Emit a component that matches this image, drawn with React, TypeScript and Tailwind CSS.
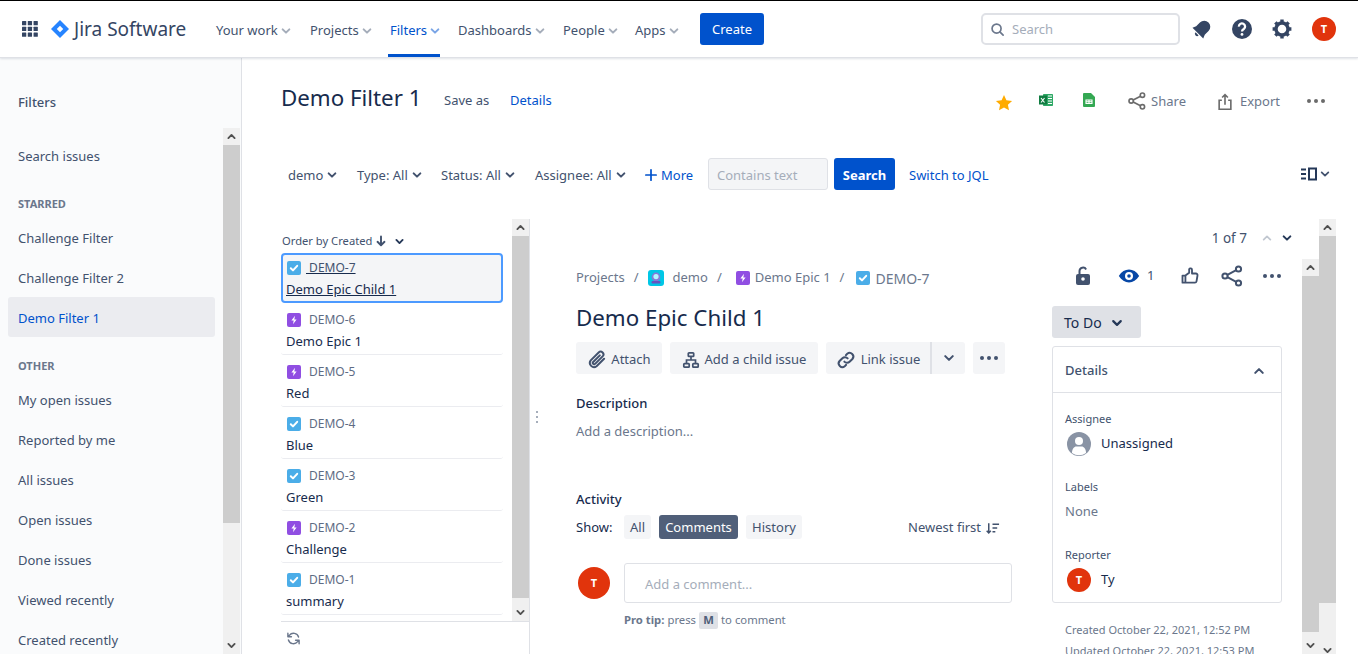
import type { ReactNode } from "react";

function Chevron({ className = "", up = false, color = "#42526e", width = 2.4 }: { className?: string; up?: boolean; color?: string; width?: number }) {
  return (
    <svg viewBox="0 0 24 24" className={className} fill="none" stroke={color} strokeWidth={width} strokeLinecap="round" strokeLinejoin="round">
      <path d={up ? "M7 14.5l5-5 5 5" : "M7 9.5l5 5 5-5"} />
    </svg>
  );
}

function Dots({ color = "#42526e" }: { color?: string }) {
  return (
    <svg viewBox="0 0 24 24" className="w-6 h-6" fill={color}>
      <circle cx="5" cy="12" r="2" />
      <circle cx="12" cy="12" r="2" />
      <circle cx="19" cy="12" r="2" />
    </svg>
  );
}

function ShareIcon({ color = "#42526e", className = "w-6 h-6" }: { color?: string; className?: string }) {
  return (
    <svg viewBox="0 0 24 24" className={className} fill="none" stroke={color} strokeWidth="2">
      <circle cx="18.5" cy="5" r="2.6" />
      <circle cx="5" cy="12" r="2.6" />
      <circle cx="18.5" cy="19" r="2.6" />
      <path d="M7.4 10.8l8.8-4.6M7.4 13.2l8.8 4.6" />
    </svg>
  );
}

function TaskIcon() {
  return (
    <svg viewBox="0 0 14 14" className="w-[14px] h-[14px] shrink-0">
      <rect width="14" height="14" rx="2" fill="#4bade8" />
      <path d="M3.8 7.2l2.2 2.2 4.2-4.6" fill="none" stroke="#fff" strokeWidth="2" strokeLinecap="round" strokeLinejoin="round" />
    </svg>
  );
}

function EpicIcon() {
  return (
    <svg viewBox="0 0 14 14" className="w-[14px] h-[14px] shrink-0">
      <rect width="14" height="14" rx="2" fill="#904ee2" />
      <path d="M8 2.8L4.4 7.6h2.3L6 11.2l3.6-4.8H7.3z" fill="#fff" />
    </svg>
  );
}

function Avatar({ size }: { size: string }) {
  return (
    <div className={`${size} rounded-full bg-[#e1340c] text-white flex items-center justify-center font-bold text-[11px] shrink-0`}>T</div>
  );
}

function ScrollBar({ className, thumb, downOffset = "" }: { className: string; thumb: string; downOffset?: string }) {
  return (
    <div className={`w-[17px] shrink-0 flex flex-col bg-[#f0f0f0] ${className}`}>
      <div className="h-[17px] shrink-0 flex items-center justify-center">
        <Chevron up className="w-[15px] h-[15px]" color="#505050" width={3} />
      </div>
      <div className={`${thumb} shrink-0 bg-[#cdcdcd]`} />
      <div className={`mt-auto h-[17px] shrink-0 flex items-center justify-center ${downOffset}`}>
        <Chevron className="w-[15px] h-[15px]" color="#505050" width={3} />
      </div>
    </div>
  );
}

function NavItem({ label, width, active = false }: { label: string; width: string; active?: boolean }) {
  return (
    <div className={`${width} h-full flex items-center shrink-0`}>
      <div className={`h-full flex items-center border-b-[3px] pt-[7px] ${active ? "w-[52px] -ml-[2px] pl-[2px] border-[#0052cc] text-[#0052cc]" : "border-transparent text-[#42526e]"}`}>
        <span>{label}</span>
        <Chevron className="w-[16px] h-[16px] shrink-0" color={active ? "#7aa5e6" : "#a5adba"} width={3} />
      </div>
    </div>
  );
}

function Header() {
  return (
    <header className="h-[57px] shrink-0 flex items-center bg-white border-b border-[#dfe1e6] shadow-[0_1px_2px_rgba(9,30,66,0.12)] z-10 text-[13px]">
      <svg viewBox="0 0 18 18" className="w-[16px] h-[16px] ml-[22px] shrink-0" fill="#344563">
        {[0, 6.5, 13].map((x) =>
          [0, 6.5, 13].map((y) => <rect key={`${x}-${y}`} x={x} y={y} width="4.8" height="4.8" rx="0.6" />)
        )}
      </svg>
      <svg viewBox="0 0 20 20" className="w-[18px] h-[18px] ml-[13px] shrink-0">
        <path d="M10 0l10 10-10 10L0 10z" fill="#2684ff" />
        <path d="M10 6.4L13.6 10 10 13.6 6.4 10z" fill="#fff" />
      </svg>
      <span className="ml-[5px] w-[142px] text-[19px] text-[#344563] shrink-0">Jira Software</span>
      <div className="flex items-center h-full">
        <NavItem label="Your work" width="w-[94px]" />
        <NavItem label="Projects" width="w-[80px]" />
        <NavItem label="Filters" width="w-[68px]" active />
        <NavItem label="Dashboards" width="w-[105px]" />
        <NavItem label="People" width="w-[72px]" />
        <NavItem label="Apps" width="w-[65px]" />
      </div>
      <button className="w-[64px] h-[32px] pt-[2px] rounded-[3px] bg-[#0052cc] text-white text-[13px] shrink-0">Create</button>
      <div className="ml-[217px] w-[199px] h-[32px] rounded-[5px] border-2 border-[#dfe1e6] flex items-center pl-[7px] shrink-0">
        <svg viewBox="0 0 16 16" className="w-[15px] h-[15px]" fill="none" stroke="#6b778c" strokeWidth="1.8">
          <circle cx="7" cy="7" r="4.8" />
          <path d="M10.5 10.5l3.5 3.5" strokeLinecap="round" />
        </svg>
        <span className="ml-[7px] pt-[2px] text-[#a5adba]">Search</span>
      </div>
      <svg viewBox="0 0 24 24" className="w-[26px] h-[26px] ml-[9px] -mr-px shrink-0" fill="#344563">
        <g transform="rotate(45 12 12)">
          <path d="M12 3.5a5.6 5.6 0 0 0-5.6 5.6V14L5 17.4h14L17.6 14V9.1A5.6 5.6 0 0 0 12 3.5z" />
          <path d="M10 18.4h4a2 2 0 0 1-4 0z" />
        </g>
      </svg>
      <svg viewBox="0 0 24 24" className="w-[24px] h-[24px] ml-[16px] shrink-0">
        <circle cx="12" cy="12" r="10" fill="#344563" />
        <path d="M8.9 9.6A3.1 3.1 0 1 1 13.8 12c-1.2.8-1.8 1.2-1.8 2.4" fill="none" stroke="#fff" strokeWidth="2.3" />
        <circle cx="12" cy="17.4" r="1.4" fill="#fff" />
      </svg>
      <svg viewBox="0 0 24 24" className="w-[24px] h-[24px] ml-[16px] shrink-0" fill="none" stroke="#344563">
        <circle cx="12" cy="12" r="6" strokeWidth="3.4" />
        {[0, 45, 90, 135].map((r) => (
          <path key={r} d="M12 2.6v18.8" strokeWidth="3.4" transform={`rotate(${r} 12 12)`} strokeDasharray="3.4 12 3.4" />
        ))}
      </svg>
      <div className="ml-[18px] shrink-0"><Avatar size="w-[24px] h-[24px]" /></div>
    </header>
  );
}

const starred = ["Challenge Filter", "Challenge Filter 2", "Demo Filter 1"];
const other = ["My open issues", "Reported by me", "All issues", "Open issues", "Done issues", "Viewed recently", "Created recently"];

function SideItem({ label, active = false }: { label: string; active?: boolean }) {
  return (
    <div className={`h-[40px] ml-[8px] mr-[8px] px-[10px] pt-[4px] flex items-center rounded-[3px] ${active ? "bg-[#ebecf0] text-[#0052cc]" : "text-[#42526e]"}`}>
      {label}
    </div>
  );
}

function Sidebar() {
  return (
    <aside className="w-[242px] shrink-0 bg-[#fafbfc] border-r border-[#dfe1e6] flex flex-col text-[13px] overflow-hidden">
      <div className="h-[70px] shrink-0 pl-[18px] pt-[34px] font-medium text-[#42526e] leading-[20px]">Filters</div>
      <div className="flex-1 flex min-h-0">
        <div className="flex-1 overflow-hidden pt-[7px]">
          <SideItem label="Search issues" />
          <div className="h-[42px] pl-[18px] pt-[19px] text-[11px] font-bold text-[#6b778c] leading-[20px]">STARRED</div>
          {starred.map((s) => <SideItem key={s} label={s} active={s === "Demo Filter 1"} />)}
          <div className="h-[42px] pl-[18px] pt-[19px] text-[11px] font-bold text-[#6b778c] leading-[20px]">OTHER</div>
          {other.map((s) => <SideItem key={s} label={s} />)}
        </div>
        <ScrollBar className="h-[526px] mr-px" thumb="h-[378px]" />
      </div>
    </aside>
  );
}

const issues: { id: string; title: string; epic: boolean }[] = [
  { id: "DEMO-6", title: "Demo Epic 1", epic: true },
  { id: "DEMO-5", title: "Red", epic: true },
  { id: "DEMO-4", title: "Blue", epic: false },
  { id: "DEMO-3", title: "Green", epic: false },
  { id: "DEMO-2", title: "Challenge", epic: true },
  { id: "DEMO-1", title: "summary", epic: false },
];

function IssueList() {
  return (
    <div className="w-[249px] shrink-0 flex flex-col border-r border-[#dfe1e6]">
      <div className="h-[402px] shrink-0 flex">
        <div className="flex-1 overflow-hidden">
          <div className="h-[34px] pt-[10px] pl-px flex items-center text-[11.2px] text-[#42526e]">
            <span>Order by Created</span>
            <svg viewBox="0 0 12 12" className="w-[12px] h-[12px] ml-[3px]" fill="none" stroke="#42526e" strokeWidth="1.9" strokeLinecap="round" strokeLinejoin="round">
              <path d="M6 1.5v8.5M2.5 6.8L6 10.2l3.5-3.4" />
            </svg>
            <Chevron className="w-[15px] h-[15px] ml-[5px]" color="#253858" width={3} />
          </div>
          <div className="h-[50px] w-[222px] rounded-[4px] border-2 border-[#4c9aff] bg-[#f4f5f7] pl-[3px] flex flex-col">
            <div className="h-[24px] pt-[2px] flex items-center pl-[1px] text-[12px] text-[#42526e]">
              <TaskIcon />
              <span className="ml-[5px] underline whitespace-pre decoration-[#172b4d]"> DEMO-7</span>
            </div>
            <div className="mt-px text-[13px] text-[#172b4d] underline leading-[18px]">Demo Epic Child 1</div>
          </div>
          {issues.map((it) => (
            <div key={it.id} className="h-[52px] w-[222px] pl-[6px] border-b-[1px] border-[#ebecf0] rounded-b-[3px] flex flex-col">
              <div className="h-[26px] pt-[8px] flex items-center text-[12px] text-[#5e6c84]">
                {it.epic ? <EpicIcon /> : <TaskIcon />}
                <span className="ml-[8px]">{it.id}</span>
              </div>
              <div className="mt-[3px] -ml-px text-[13px] text-[#172b4d] leading-[18px]">{it.title}</div>
            </div>
          ))}
        </div>
        <ScrollBar className="h-full" thumb="h-[362px]" />
      </div>
      <div className="h-[33px] border-t border-[#dfe1e6] pl-[5px] flex items-center">
        <svg viewBox="0 0 16 16" className="w-[15px] h-[15px]" fill="none" stroke="#6b778c" strokeWidth="1.5" strokeLinecap="round" strokeLinejoin="round">
          <path d="M13.4 6.4A5.6 5.6 0 0 0 3.6 4.6L2 6.2M2 2.4v3.8h3.8" />
          <path d="M2.6 9.6a5.6 5.6 0 0 0 9.8 1.8L14 9.8M14 13.6V9.8h-3.8" />
        </svg>
      </div>
    </div>
  );
}

function Btn({ children, className = "" }: { children: ReactNode; className?: string }) {
  return (
    <div className={`h-[32px] rounded-[3px] bg-[#f4f5f7] text-[#42526e] flex items-center justify-center shrink-0 ${className}`}>{children}</div>
  );
}

function Crumb({ children }: { children: ReactNode }) {
  return <span className="flex items-center">{children}</span>;
}

function Slash() {
  return <span className="mx-[9px] text-[#6b778c]">/</span>;
}

function IssueDetail() {
  return (
    <div className="flex-1 flex min-w-0">
      <div className="flex-1 flex flex-col min-w-0">
        <div className="h-[40px] shrink-0 flex items-center justify-end pr-[24px] pb-[2px] text-[13.5px] text-[#42526e]">
          <span>1 of 7</span>
          <Chevron up className="w-[16px] h-[16px] ml-[12px]" color="#c1c7d0" width={2.6} />
          <Chevron className="w-[16px] h-[16px] ml-[4px]" color="#253858" width={3} />
        </div>
        <div className="flex-1 flex min-h-0">
          <div className="w-[14px] shrink-0 pt-[151px] flex justify-center">
            <svg viewBox="0 0 4 14" className="w-[4px] h-[14px]" fill="#8993a4">
              <circle cx="2" cy="2" r="1" />
              <circle cx="2" cy="7" r="1" />
              <circle cx="2" cy="12" r="1" />
            </svg>
          </div>
          <div className="w-[758px] pl-[32px] flex shrink-0 text-[13px] overflow-hidden">
            <div className="w-[436px] shrink-0">
              <div className="h-[36px] pt-[2px] flex items-center text-[#6b778c]">
                <Crumb>Projects</Crumb>
                <Slash />
                <Crumb>
                  <svg viewBox="0 0 16 16" className="w-[16px] h-[16px] mr-[9px]">
                    <rect width="16" height="16" rx="3" fill="#00c7e6" />
                    <circle cx="8" cy="7" r="4.4" fill="#8777d9" />
                    <circle cx="8" cy="6.6" r="2.6" fill="#b3f5ff" />
                    <rect x="3.5" y="11" width="9" height="2.6" rx="1" fill="#6554c0" />
                  </svg>
                  demo
                </Crumb>
                <Slash />
                <Crumb><span className="ml-[5px] mr-[5px]"><EpicIcon /></span>Demo Epic 1</Crumb>
                <Slash />
                <Crumb><span className="ml-[3px] mr-[5px]"><TaskIcon /></span><span className="text-[14px]">DEMO-7</span></Crumb>
              </div>
              <h1 className="h-[47px] pt-[6px] text-[22.3px] text-[#172b4d] leading-[34px]">Demo Epic Child 1</h1>
              <div className="flex gap-[8px]">
                <Btn className="w-[86px] pt-[3px]">
                  <svg viewBox="0 0 24 24" className="w-[20px] h-[20px] mr-[4px]" fill="none" stroke="#42526e" strokeWidth="2.4" strokeLinecap="round">
                    <path d="M20.5 10.5l-9 9a5 5 0 0 1-7-7l9.5-9.5a3.3 3.3 0 0 1 4.7 4.7l-9 9a1.6 1.6 0 0 1-2.3-2.3l8-8" />
                  </svg>
                  Attach
                </Btn>
                <Btn className="w-[148px] pt-[3px]">
                  <svg viewBox="0 0 20 20" className="w-[18px] h-[18px] mr-[5px]" fill="none" stroke="#42526e" strokeWidth="1.9">
                    <rect x="7" y="2" width="6" height="4" rx="0.8" />
                    <rect x="2" y="14" width="6" height="4" rx="0.8" />
                    <rect x="12" y="14" width="6" height="4" rx="0.8" />
                    <path d="M10 6v4M5 14v-4h10v4" />
                  </svg>
                  Add a child issue
                </Btn>
                <div className="flex">
                  <Btn className="w-[106px] pt-[3px] rounded-r-none border-r-2 border-[#dfe1e6]">
                    <svg viewBox="0 0 24 24" className="w-[20px] h-[20px] mr-[5px]" fill="none" stroke="#42526e" strokeWidth="2.4" strokeLinecap="round">
                      <path d="M10 14a4.4 4.4 0 0 0 6.3.2l3.4-3.4a4.4 4.4 0 0 0-6.2-6.2l-1.7 1.6" />
                      <path d="M14 10a4.4 4.4 0 0 0-6.3-.2l-3.4 3.4a4.4 4.4 0 0 0 6.2 6.2l1.7-1.6" />
                    </svg>
                    Link issue
                  </Btn>
                  <Btn className="w-[33px] rounded-l-none">
                    <Chevron className="w-[18px] h-[18px]" color="#42526e" width={2.8} />
                  </Btn>
                </div>
                <Btn className="w-[32px]"><Dots /></Btn>
              </div>
              <h2 className="mt-[19px] font-medium text-[#172b4d] leading-[20px]">Description</h2>
              <p className="mt-[8px] text-[#6b778c] leading-[20px]">Add a description...</p>
              <h2 className="mt-[48px] font-medium text-[#172b4d] leading-[20px]">Activity</h2>
              <div className="mt-[6px] flex items-center h-[24px]">
                <span className="w-[48px] pt-[2px] text-[#172b4d]">Show:</span>
                <div className="w-[27px] h-[24px] pt-[2px] rounded-[3px] bg-[#f4f5f7] text-[#42526e] flex items-center justify-center">All</div>
                <div className="w-[79px] h-[24px] pt-[2px] ml-[8px] rounded-[3px] bg-[#505f79] text-white flex items-center justify-center">Comments</div>
                <div className="w-[56px] h-[24px] pt-[2px] ml-[8px] rounded-[3px] bg-[#f4f5f7] text-[#42526e] flex items-center justify-center">History</div>
                <span className="ml-auto mr-[12px] pt-[2px] text-[#42526e] flex items-center">
                  Newest first
                  <svg viewBox="0 0 16 16" className="w-[15px] h-[15px] ml-[4px]" fill="none" stroke="#42526e" strokeWidth="1.6">
                    <path d="M4 2.5v10M1.8 10.4L4 12.8l2.2-2.4M8 3.5h7M8 7.5h5M8 11.5h3" />
                  </svg>
                </span>
              </div>
              <div className="mt-[24px] flex">
                <div className="w-[48px] pl-[2px] pt-[4px] shrink-0"><Avatar size="w-[32px] h-[32px]" /></div>
                <div className="w-[388px] h-[40px] pt-[4px] rounded-[3px] border border-[#dfe1e6] pl-[20px] flex items-center text-[#a5adba]">Add a comment...</div>
              </div>
              <div className="mt-[8px] ml-[48px] flex items-center text-[11.3px] text-[#6b778c] h-[18px]">
                <b className="font-bold">Pro tip:</b>
                <span className="ml-[3px]">press</span>
                <span className="mx-[3px] h-[17px] w-[19px] rounded-[2px] bg-[#dfe1e6] flex items-center justify-center font-bold text-[#505f79]">M</span>
                <span>to comment</span>
              </div>
            </div>
            <div className="ml-[40px] w-[230px] shrink-0">
              <div className="h-[36px] pb-[2px] flex items-center text-[#42526e] pl-[19px]">
                <svg viewBox="0 0 24 24" className="w-[24px] h-[24px] shrink-0" fill="#42526e">
                  <rect x="5" y="10" width="14" height="11" rx="2" />
                  <path d="M8.5 10V7a3.5 3.5 0 0 1 6.6-1.5" fill="none" stroke="#42526e" strokeWidth="2" />
                  <circle cx="12" cy="15" r="1.8" fill="#fff" />
                </svg>
                <svg viewBox="0 0 24 24" className="w-[24px] h-[24px] ml-[22px] shrink-0">
                  <path d="M1.8 12C4.6 7.6 8 5.6 12 5.6s7.4 2 10.2 6.4c-2.8 4.4-6.2 6.4-10.200 6.400S4.600 16.400 1.800 12z" fill="#0747a6" />
                  <circle cx="12" cy="12" r="4" fill="#fff" />
                  <circle cx="12" cy="12" r="1.8" fill="#0747a6" />
                </svg>
                <span className="w-[9px] ml-[6px] text-[#42526e]">1</span>
                <svg viewBox="0 0 24 24" className="w-[20px] h-[20px] ml-[26px] shrink-0" fill="none" stroke="#42526e" strokeWidth="2.2" strokeLinejoin="round">
                  <path d="M3 11.5h3.5V20H3zM6.5 11.5L11 8V3.8a1.8 1.8 0 0 1 3.4.9V9h4.6a2 2 0 0 1 2 2.4l-1.2 7a2 2 0 0 1-2 1.6H6.5" />
                </svg>
                <span className="ml-[20px] flex"><ShareIcon /></span>
                <span className="ml-[16px] flex"><Dots /></span>
              </div>
              <div className="mt-[11px] w-[89px] h-[32px] pt-px rounded-[3px] bg-[#dfe1e6] text-[#172b4d] text-[14px] flex items-center pl-[12px]">
                To Do
                <Chevron className="w-[18px] h-[18px] ml-[6px]" color="#253858" width={3} />
              </div>
              <div className="mt-[8px] h-[257px] rounded-[3px] border border-[#dfe1e6] px-[12px]">
                <div className="-mx-[12px] h-[46px] pt-[3px] px-[12px] border-b border-[#dfe1e6] flex items-center justify-between font-medium text-[#42526e]">
                  Details
                  <Chevron up className="w-[18px] h-[18px] mr-[1px]" color="#42526e" width={2.8} />
                </div>
                <div className="mt-[18px] text-[11px] text-[#42526e] leading-[16px]">Assignee</div>
                <div className="mt-[5px] h-[24px] flex items-center text-[#172b4d]">
                  <svg viewBox="0 0 24 24" className="w-[24px] h-[24px] ml-[2px] shrink-0">
                    <circle cx="12" cy="12" r="12" fill="#8993a4" />
                    <circle cx="12" cy="9" r="4" fill="#fff" />
                    <path d="M5 21c0-4 2-6.5 4.5-6.5h5c2.5 0 4.500 2.500 4.500 6.500a12 12 0 0 1-14 0z" fill="#fff" />
                  </svg>
                  <span className="ml-[10px]">Unassigned</span>
                </div>
                <div className="mt-[23px] text-[11px] text-[#42526e] leading-[16px]">Labels</div>
                <div className="mt-[6px] text-[#6b778c] leading-[20px]">None</div>
                <div className="mt-[26px] text-[11px] text-[#42526e] leading-[16px]">Reporter</div>
                <div className="mt-[5px] h-[24px] flex items-center text-[#172b4d]">
                  <span className="ml-[2px]"><Avatar size="w-[24px] h-[24px]" /></span>
                  <span className="ml-[10px]">Ty</span>
                </div>
              </div>
              <div className="mt-[16px] ml-[13px] text-[11px] text-[#6b778c] leading-[21px] whitespace-nowrap">
                <div>Created October 22, 2021, 12:52 PM</div>
                <div>Updated October 22, 2021, 12:53 PM</div>
              </div>
            </div>
          </div>
          <ScrollBar className="h-full" thumb="h-[356px]" />
        </div>
      </div>
      <ScrollBar className="h-full" thumb="h-[367px]" downOffset="-mb-[5px]" />
    </div>
  );
}

function TitleBar() {
  return (
    <div className="h-[87px] shrink-0 flex items-center pb-[8px] pl-[39px] text-[13px] text-[#42526e]">
      <h1 className="text-[22.3px] text-[#172b4d] w-[163px] shrink-0">Demo Filter 1</h1>
      <span className="w-[66px] pt-[6px] shrink-0">Save as</span>
      <span className="pt-[6px] text-[#0052cc]">Details</span>
      <div className="ml-auto mt-[8px] flex items-center text-[#6b778c]">
        <svg viewBox="0 0 24 24" className="w-[20px] h-[20px] mt-[3px] shrink-0" fill="#ffab00">
          <path d="M12 2.5l2.9 6.2 6.8.8-5 4.6 1.3 6.700L12 17.500l-6 3.300 1.300-6.700-5-4.600 6.800-.8z" />
        </svg>
        <svg viewBox="0 0 14 14" className="w-[14px] h-[14px] ml-[25px] -mt-[4px] shrink-0">
          <rect x="4" y="1" width="10" height="12" rx="0.8" fill="#2fa866" />
          <path d="M9 3h4M9 5.500h4M9 8h4M9 10.500h4" stroke="#fff" strokeWidth="1" />
          <rect x="0" y="2.500" width="8" height="9" fill="#107c41" />
          <path d="M2 5l3.500 4.500M5.500 5L2 9.500" stroke="#fff" strokeWidth="1.100" />
        </svg>
        <svg viewBox="0 0 12 14" className="w-[12px] h-[14px] ml-[30px] -mt-[4px] shrink-0">
          <path d="M0 1a1 1 0 0 1 1-1h7l4 4v9a1 1 0 0 1-1 1H1a1 1 0 0 1-1-1z" fill="#34a853" />
          <path d="M3 7h6v3.500H3zM6 7v3.500M3 8.700h6" fill="none" stroke="#fff" strokeWidth="1.100" />
        </svg>
        <span className="ml-[32px] flex -mt-[2px]"><ShareIcon color="#6b6b6b" className="w-[20px] h-[20px]" /></span>
        <span className="ml-[4px]">Share</span>
        <svg viewBox="0 0 20 20" className="w-[18px] h-[18px] ml-[30px] shrink-0" fill="none" stroke="#6b6b6b" strokeWidth="1.800">
          <path d="M6.500 8H3.500v10h13V8h-3M10 13V2M6.800 5L10 1.800 13.200 5" />
        </svg>
        <span className="ml-[6px]">Export</span>
        <span className="ml-[24px] mr-[30px] flex -mt-[2px]"><Dots color="#6b6b6b" /></span>
      </div>
    </div>
  );
}

function FilterBtn({ label, width }: { label: string; width: string }) {
  return (
    <div className={`${width} pt-[3px] shrink-0 flex items-center`}>
      <span>{label}</span>
      <Chevron className="w-[16px] h-[16px] ml-[1px] -mt-[2px]" color="#42526e" width={3} />
    </div>
  );
}

function FilterBar() {
  return (
    <div className="h-[32px] mt-[13px] shrink-0 flex items-center pl-[46px] text-[13px] text-[#42526e]">
      <FilterBtn label="demo" width="w-[69px]" />
      <FilterBtn label="Type: All" width="w-[84px]" />
      <FilterBtn label="Status: All" width="w-[94px]" />
      <FilterBtn label="Assignee: All" width="w-[110px]" />
      <svg viewBox="0 0 14 14" className="w-[12px] h-[12px] mt-[2px] shrink-0" fill="none" stroke="#0052cc" strokeWidth="2">
        <path d="M7 1v12M1 7h12" strokeLinecap="round" />
      </svg>
      <span className="ml-[4px] w-[47px] pt-[3px] text-[#0052cc]">More</span>
      <div className="w-[120px] h-[32px] pt-[3px] rounded-[3px] border border-[#dfe1e6] bg-[#f4f5f7] pl-[8px] flex items-center text-[#a5adba] shrink-0">Contains text</div>
      <button className="ml-[6px] w-[61px] h-[32px] pt-[3px] rounded-[3px] bg-[#0052cc] text-white font-bold shrink-0">Search</button>
      <span className="ml-[14px] pt-[3px] text-[#0052cc]">Switch to JQL</span>
      <div className="ml-auto mr-[25px] flex items-center">
        <svg viewBox="0 0 16 14" className="w-[16px] h-[14px]" fill="none" stroke="#253858">
          <path d="M0 2.500h5M0 7h5M0 11.500h5" strokeWidth="1.800" />
          <rect x="8" y="1.500" width="7" height="11" strokeWidth="2" />
        </svg>
        <Chevron className="w-[16px] h-[16px]" color="#42526e" width={2.600} />
      </div>
    </div>
  );
}

export default function App() {
  return (
    <div className="w-[1358px] h-[654px] overflow-hidden flex flex-col bg-white border-t border-black font-['Noto_Sans',sans-serif]">
      <Header />
      <div className="flex-1 flex min-h-0">
        <Sidebar />
        <main className="flex-1 flex flex-col min-w-0">
          <TitleBar />
          <FilterBar />
          <div className="mt-[29px] flex-1 flex min-h-0 pl-[39px] pr-[22px]">
            <IssueList />
            <IssueDetail />
          </div>
        </main>
      </div>
    </div>
  );
}
